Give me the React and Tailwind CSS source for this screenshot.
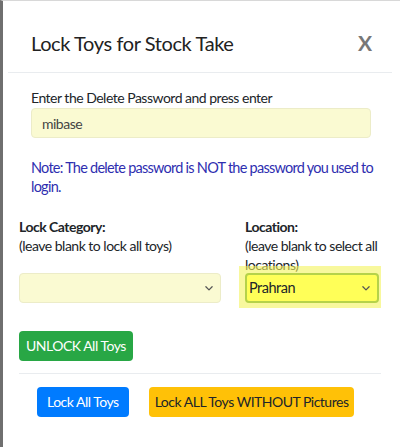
import React from 'react';

const Chevron = () => (
  <svg width="10" height="10" viewBox="0 0 16 16" className="text-[#555]">
    <path d="M3 6l5 5 5-5" fill="none" stroke="currentColor" strokeWidth="2" strokeLinecap="round" strokeLinejoin="round" />
  </svg>
);

const App = () => {
  return (
    <div className="w-[400px] h-[447px] bg-white relative overflow-hidden border-l-[3px] border-[#6f6f6f] border-t border-t-[#d8d8d8] text-[#212529] text-[14px] tracking-[-0.5px]" style={{ fontFamily: 'Lato, "Noto Sans", sans-serif' }}>
      <div className="absolute left-[-3px] top-[8px] w-[2px] h-[32px] bg-[#1e7e34]"></div>

      <div className="ml-[5px] mr-[8px]">
        <div className="h-[72px] pl-[23px] pr-[20px] pt-[12px] flex items-center justify-between border-b border-[#e9ecef]">
          <h4 className="text-[20px] leading-none text-[#222] tracking-[-0.4px]">Lock Toys for Stock Take</h4>
          <span className="text-[21px] font-bold text-[#777] leading-none tracking-normal">X</span>
        </div>

        <div className="pl-[23px] pr-[21px] pt-[15px]">
          <p className="leading-[20px]">Enter the Delete Password and press enter</p>
          <div className="h-[30px] rounded-[4px] border border-[#ececc8] bg-[#fafad2] flex items-center px-[10px] text-[#444]">mibase</div>
          <p className="mt-[20px] mr-[-12px] text-[14.5px] leading-[19px] tracking-[-0.75px] text-[#2e2eb0]">Note: The delete password is NOT the password you used to login.</p>
        </div>

        <div className="px-[11px] pt-[21px]">
          <div className="grid grid-cols-[202px_1fr] gap-x-[24px]">
            <div>
              <p className="font-bold leading-[19px]">Lock Category:</p>
              <p className="leading-[19px]">(leave blank to lock all toys)</p>
            </div>
            <div>
              <p className="font-bold leading-[19px]">Location:</p>
              <p className="leading-[19px]">(leave blank to select all locations)</p>
            </div>
            <div className="h-[30px] mt-[-1px] rounded-[4px] border border-[#ececc8] bg-[#fafad2] flex items-center justify-end pr-[6px]">
              <Chevron />
            </div>
            <div className="relative mt-[-1px] mr-[2px]">
              <div className="absolute left-[-6px] right-[-2px] top-[-7px] bottom-[-5px] bg-[#f4f45c]/60"></div>
              <div className="relative h-[30px] rounded-[4px] border-2 border-[#b5d24a] bg-[#ffff58] flex items-center justify-between pl-[2px] pr-[6px] text-[14.5px]">
                <span>Prahran</span>
                <Chevron />
              </div>
            </div>
          </div>

          <button className="mt-[28px] h-[30px] px-[7px] rounded-[4px] bg-[#28a745] text-white leading-none whitespace-nowrap">UNLOCK All Toys</button>

          <div className="mt-[12px] border-t border-[#e9ecef]"></div>

          <div className="pt-[13px] pl-[18px] flex gap-[20px]">
            <button className="h-[30px] px-[10px] rounded-[4px] bg-[#007bff] text-white leading-none whitespace-nowrap">Lock All Toys</button>
            <button className="h-[30px] px-[6px] rounded-[4px] bg-[#ffc107] text-[#212529] leading-none whitespace-nowrap">Lock ALL Toys WITHOUT Pictures</button>
          </div>
        </div>
      </div>
    </div>
  );
};

export default App;
